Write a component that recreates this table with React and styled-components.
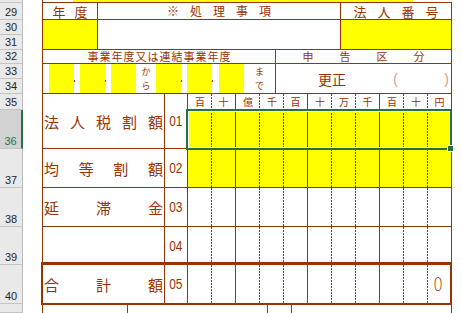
import styled, { createGlobalStyle, css } from "styled-components"

const brown = "#993300"
const yellow = "#ffff00"
const green = "#217346"

const GlobalStyle = createGlobalStyle`
  *, *::before, *::after { box-sizing: border-box; }
  html, body { margin: 0; padding: 0; background: #fff; }
  body { font-family: "Noto Sans CJK JP", "Liberation Sans", sans-serif; color: ${brown}; }
`

const Sheet = styled.div`
  display: grid;
  grid-template-columns: 23px 19px 410px;
  width: 462px;
  height: 313px;
  overflow: hidden;
  background: #fff;
`

const RowHeads = styled.div`
  display: flex;
  flex-direction: column;
  background: #e9e9e9;
`

const RowHead = styled.div`
  flex: ${p => (p.$h ? "none" : "1")};
  height: ${p => (p.$h ? `${p.$h}px` : "auto")};
  display: flex;
  align-items: flex-end;
  justify-content: center;
  padding-bottom: 1px;
  font: 11px/11px "Liberation Sans", Arial, sans-serif;
  color: ${p => (p.$active ? green : "#262626")};
  background: ${p => (p.$active ? "#d2d2d2" : "#e9e9e9")};
  border-bottom: 1px solid #c4c4c4;
  border-right: ${p => (p.$active ? `2px solid ${green}` : "1px solid #bcbcbc")};
`

const Form = styled.div`
  display: flex;
  flex-direction: column;
  border-left: 1px solid ${brown};
`

const TopStrip = styled.div`
  height: 2px;
  display: flex;
  padding-left: 30px;
`

const TopFill = styled.div`
  width: 340px;
  background: ${yellow};
`

const Block = styled.div`
  display: grid;
  grid-template-columns: ${p => p.$cols};
  grid-template-rows: ${p => p.$rows};
  border-top: ${p => (p.$top ? `1px solid ${brown}` : "none")};
  position: relative;
`

const Cell = styled.div`
  display: flex;
  align-items: center;
  justify-content: center;
  min-width: 0;
  line-height: 1;
  color: ${brown};
  background: ${p => (p.$fill ? yellow : "#fff")};
  border-right: 1px solid ${brown};
  border-bottom: 1px solid ${brown};
  grid-row: ${p => (p.$rowSpan ? `span ${p.$rowSpan}` : "auto")};
`

const Spread = styled.span`
  display: flex;
  gap: ${p => p.$gap}px;
  font-size: ${p => p.$size}px;
  line-height: 1;
`

const Label = styled(Cell)`
  justify-content: space-between;
  padding: 0 1px;
  font-size: 15px;
`

const Num = styled(Cell)`
  font: 14px/1 "Liberation Sans", Arial, sans-serif;

  & > span {
    display: inline-block;
    transform: scaleX(0.85);
  }
`

const Digit = styled.div`
  display: flex;
  align-items: center;
  justify-content: center;
  line-height: 1;
  font-size: 10px;
  color: ${brown};
  background-color: ${p => (p.$fill ? yellow : "#fff")};
  border-bottom: 1px solid ${brown};
  ${p =>
    p.$dash
      ? css`
          background-image: repeating-linear-gradient(to bottom, ${brown} 0 2px, transparent 2px 3px);
          background-size: 1px 100%;
          background-position: right top;
          background-repeat: no-repeat;
        `
      : css`
          border-right: 1px solid ${brown};
        `}
`

const Zero = styled.span`
  display: inline-block;
  margin-right: 3px;
  font: 200 19px/1 "DejaVu Sans", "Liberation Sans", sans-serif;
  transform: scaleX(0.8);
`

const DateCell = styled(Cell)`
  justify-content: flex-start;
  align-items: stretch;
  padding-left: 6px;
`

const DateBox = styled.div`
  width: 25px;
  background: ${yellow};
`

const Sep = styled.div`
  width: ${p => p.$w}px;
  padding-top: 16px;
`

const Dot = styled.div`
  width: 1px;
  height: 2px;
  background: ${brown};
`

const VText = styled.div`
  width: ${p => (p.$w ? `${p.$w}px` : "auto")};
  flex: ${p => (p.$w ? "none" : "1")};
  display: flex;
  flex-direction: column;
  align-items: center;
  justify-content: space-around;
  font-size: 9px;
  line-height: 1;
`

const KubunCell = styled(Cell)`
  justify-content: flex-start;
  padding-left: 42px;
`

const Kousei = styled.span`
  font-size: 14px;
`

const Parens = styled.span`
  margin-left: auto;
  width: 58px;
  display: flex;
  justify-content: space-between;
  padding-right: 2px;
  font: 15px/1 "Liberation Sans", Arial, sans-serif;
  color: #cfa690;
`

const Selection = styled.div`
  position: absolute;
  left: 143px;
  top: 15px;
  width: 266px;
  height: 41px;
  border: 2px solid ${green};
  box-shadow: inset 0 0 0 1px #fff;
  pointer-events: none;
`

const Handle = styled.div`
  position: absolute;
  right: -4px;
  bottom: -4px;
  width: 7px;
  height: 7px;
  background: ${green};
  border: 1px solid #fff;
`

const TotalFrame = styled.div`
  position: absolute;
  left: -2px;
  top: 168px;
  width: 411px;
  height: 43px;
  border: 2px solid ${brown};
  pointer-events: none;
`

const Foot = styled.div`
  display: flex;
  flex: 1;
`

const FootCell = styled.div`
  width: ${p => p.$w}px;
  border-right: 1px solid ${brown};
`

const rows = [
  [3, ""], [17, "29"], [15, "30"], [15, "31"], [14, "32"], [15, "33"], [15, "34"],
  [16, "35"], [39, "36"], [39, "37"], [39, "38"], [38, "39"], [39, "40"], [0, ""],
]

const units = ["百", "十", "億", "千", "百", "十", "万", "千", "百", "十", "円"]

const chars = (text) => [...text].map((c, i) => <span key={i}>{c}</span>)

const digitRow = (fill, last) =>
  units.map((u, i) => (
    <Digit key={i} $fill={fill} $dash={i % 3 !== 1}>
      {last && i === 10 ? <Zero>{last}</Zero> : null}
    </Digit>
  ))

export default function App() {
  return (
    <>
      <GlobalStyle />
      <Sheet>
        <RowHeads>
          {rows.map(([h, n], i) => (
            <RowHead key={i} $h={h} $active={n === "36"}>{n}</RowHead>
          ))}
        </RowHeads>
        <div />
        <Form>
          <TopStrip><TopFill /></TopStrip>

          <Block $top $cols="55px 243px 111px" $rows="17px 30px">
            <Cell><Spread $gap={9} $size={13}>{chars("年度")}</Spread></Cell>
            <Cell><Spread $gap={11} $size={12}>{chars("※処理事項")}</Spread></Cell>
            <Cell><Spread $gap={11} $size={13}>{chars("法人番号")}</Spread></Cell>
            <Cell $fill />
            <Cell />
            <Cell $fill />
          </Block>

          <Block $cols="233px 176px" $rows="14px 30px">
            <Cell><Spread $gap={1} $size={11}>{chars("事業年度又は連結事業年度")}</Spread></Cell>
            <Cell><Spread $gap={26} $size={11}>{chars("申告区分")}</Spread></Cell>
            <DateCell>
              <DateBox />
              <Sep $w={6}><Dot /></Sep>
              <DateBox />
              <Sep $w={6}><Dot /></Sep>
              <DateBox />
              <VText $w={20}><span>か</span><span>ら</span></VText>
              <DateBox />
              <Sep $w={6}><Dot /></Sep>
              <DateBox />
              <Sep $w={7}><Dot /></Sep>
              <DateBox />
              <VText><span>ま</span><span>で</span></VText>
            </DateCell>
            <KubunCell>
              <Kousei>更正</Kousei>
              <Parens><span>(</span><span>)</span></Parens>
            </KubunCell>
          </Block>

          <Block $cols="122px 23px repeat(11, 24px)" $rows="16px 39px 39px 39px 38px 39px">
            <Label $rowSpan={2}>{chars("法人税割額")}</Label>
            <Num $rowSpan={2}><span>01</span></Num>
            {units.map((u, i) => (
              <Digit key={i} $dash={i % 3 !== 1}>{u}</Digit>
            ))}
            {digitRow(true)}

            <Label>{chars("均等割額")}</Label>
            <Num><span>02</span></Num>
            {digitRow(true)}

            <Label>{chars("延滞金")}</Label>
            <Num><span>03</span></Num>
            {digitRow(false)}

            <Label />
            <Num><span>04</span></Num>
            {digitRow(false)}

            <Label>{chars("合計額")}</Label>
            <Num><span>05</span></Num>
            {digitRow(false, "0")}

            <Selection><Handle /></Selection>
            <TotalFrame />
          </Block>

          <Foot>
            <FootCell $w={85} />
            <FootCell $w={140} />
            <FootCell $w={24} />
            <FootCell $w={160} />
          </Foot>
        </Form>
      </Sheet>
    </>
  )
}
